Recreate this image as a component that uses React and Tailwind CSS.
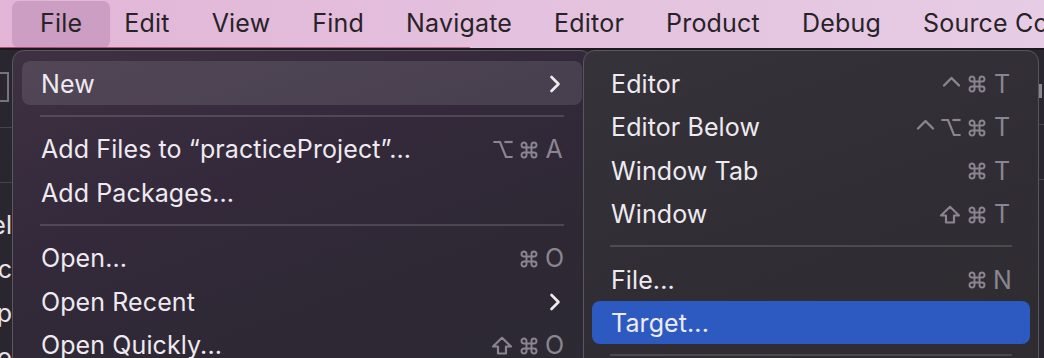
import React from "react";

const SANS = { fontFamily: "Inter, 'Noto Sans', sans-serif" };

function Chevron() {
  return (
    <svg width="12" height="20" viewBox="0 0 12 20" className="mr-[2px]">
      <polyline points="2.5,3 9.5,10 2.5,17" fill="none" stroke="#ececec" strokeWidth="2.6" strokeLinecap="round" strokeLinejoin="round" />
    </svg>
  );
}

const sym = {
  "⌘": (
    <svg width="20" height="20" viewBox="0 0 24 24" fill="none" stroke="currentColor" strokeWidth="2.3" strokeLinecap="round" strokeLinejoin="round">
      <path d="M15 6v12a3 3 0 1 0 3-3H6a3 3 0 1 0 3 3V6a3 3 0 1 0-3 3h12a3 3 0 1 0-3-3" />
    </svg>
  ),
  "⌥": (
    <svg width="20" height="19" viewBox="0 0 20 19" fill="none" stroke="currentColor" strokeWidth="2.2" strokeLinecap="square">
      <path d="M1.5 2h5.5l6 15h5.5" />
      <path d="M12.5 2h6" />
    </svg>
  ),
  "⇧": (
    <svg width="22" height="19" viewBox="0 0 22 19" fill="none" stroke="currentColor" strokeWidth="2.2" strokeLinejoin="round">
      <path d="M11 1.8 L20 10.5 H15 V17.5 H7 V10.5 H2 Z" />
    </svg>
  ),
  "⌃": (
    <svg width="19" height="19" viewBox="0 0 19 19" fill="none" stroke="currentColor" strokeWidth="2.4" strokeLinecap="round" strokeLinejoin="round">
      <path d="M2 10.5 L9.5 3 L17 10.5" />
    </svg>
  ),
};

function Keys({ keys }) {
  return (
    <div className="flex items-center gap-[6px] text-[#8a8590]">
      {keys.map((k, i) =>
        sym[k] ? (
          <span key={i} className="flex items-center">{sym[k]}</span>
        ) : (
          <span key={i} className="text-[25px] leading-none w-[18px] text-center">{k}</span>
        )
      )}
    </div>
  );
}

function Row({ label, keys, chevron, active, blue }) {
  return (
    <div
      className={
        "flex h-[43.5px] items-center justify-between rounded-[8px] px-[19px] pt-[3px] " +
        (blue ? "bg-[#2c5ac0]" : active ? "bg-[#ffffff1c]" : "")
      }
    >
      <span className="text-[25px] leading-none tracking-[0.1px] text-[#eeeaf0]">{label}</span>
      {chevron ? <Chevron /> : keys ? <Keys keys={keys} /> : null}
    </div>
  );
}

function Sep() {
  return (
    <div className="flex h-[22px] items-center px-[18px]">
      <div className="h-[2px] w-full bg-[#ffffff24]" />
    </div>
  );
}

function Clip({ text }) {
  return (
    <div className="flex h-[44px] w-[12px] items-center justify-end whitespace-nowrap">
      <span>{text}</span>
    </div>
  );
}

export default function App() {
  const bar = ["Edit", "View", "Find", "Navigate", "Editor", "Product", "Debug", "Source Control"];
  return (
    <div className="relative h-[358px] w-[1044px] overflow-hidden bg-[#2a2630]" style={SANS}>
      {/* menu bar */}
      <div className="relative flex h-[48px] items-center bg-gradient-to-r from-[#e2b5d7] via-[#e4c1de] to-[#e6cce4] pl-[12px] text-[25px] tracking-[0.2px] text-[#272327]">
        <div className="flex h-[47px] items-center rounded-[7px] bg-[#cc9ec3] px-[28px]">File</div>
        <div className="flex items-center gap-[42px] pl-[14px] whitespace-nowrap">
          {bar.map((b) => (
            <span key={b}>{b}</span>
          ))}
        </div>
        <div className="absolute bottom-0 left-0 h-[1px] w-[470px] bg-gradient-to-r from-[#b34a70] to-[#c06a8a]" />
      </div>
      <div className="h-[2px] bg-[#1c191e]" />

      {/* underlying window */}
      <div className="flex h-[308px] overflow-hidden">
        <div className="w-[40px] shrink-0 text-[25px] text-[#e8e4ea]">
          <div className="mt-[22px] h-[30px] w-[9px] border-[2px] border-l-0 border-[#77727c]" />
          <div className="mt-[25px] h-[1px] bg-[#47424c]" />
          <div className="mt-[54px] h-[1px] bg-[#47424c]" />
          <div className="mt-[21px]">
            <Clip text="Model" />
            <Clip text="Logic" />
            <Clip text="App" />
            <Clip text="Info" />
          </div>
        </div>
        <div className="flex-1" />
        <div className="w-[8px] shrink-0">
          <div className="mt-[34px] ml-[3px] h-[14px] w-[3px] bg-[#8a8590]" />
          <div className="mt-[26px] h-[1px] bg-[#47424c]" />
          <div className="mt-[54px] h-[1px] bg-[#47424c]" />
        </div>
      </div>

      {/* main File menu */}
      <div
        className="absolute left-[12px] top-[50px] h-[340px] w-[580px] rounded-[12px] border border-[#5c5660] px-[9px] pt-[10px]"
        style={{ background: "linear-gradient(160deg, #3e3142 0%, #33293a 40%, #2e2834 70%, #2c2a33 100%)" }}
      >
        <Row label="New" chevron active />
        <Sep />
        <Row label="Add Files to “practiceProject”..." keys={["⌥", "⌘", "A"]} />
        <Row label="Add Packages..." />
        <Sep />
        <Row label="Open..." keys={["⌘", "O"]} />
        <Row label="Open Recent" chevron />
        <Row label="Open Quickly..." keys={["⇧", "⌘", "O"]} />
      </div>

      {/* New submenu */}
      <div
        className="absolute left-[583px] top-[50px] h-[340px] w-[456px] rounded-[12px] border border-[#5a5660] px-[8px] pt-[10px]"
        style={{ background: "linear-gradient(160deg, #35323a 0%, #302d34 50%, #2e2b31 100%)" }}
      >
        <Row label="Editor" keys={["⌃", "⌘", "T"]} />
        <Row label="Editor Below" keys={["⌃", "⌥", "⌘", "T"]} />
        <Row label="Window Tab" keys={["⌘", "T"]} />
        <Row label="Window" keys={["⇧", "⌘", "T"]} />
        <Sep />
        <Row label="File..." keys={["⌘", "N"]} />
        <Row label="Target..." blue />
        <Sep />
      </div>
    </div>
  );
}
